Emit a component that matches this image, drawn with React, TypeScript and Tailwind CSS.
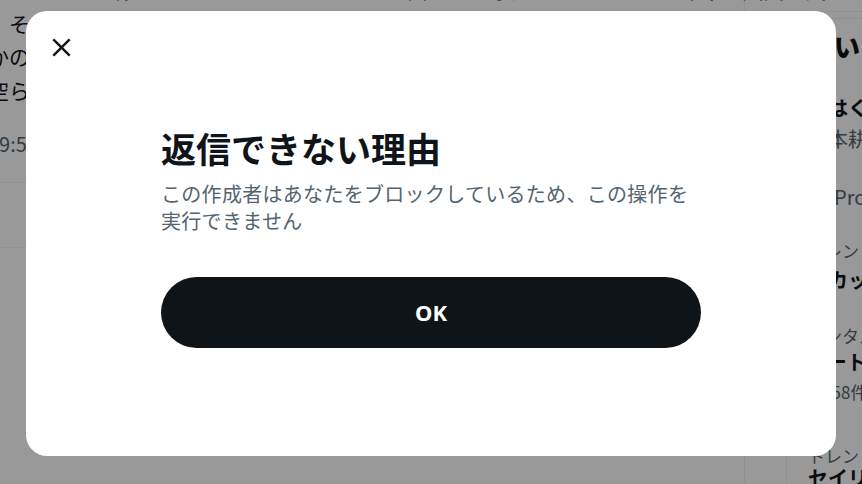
import React from 'react';

const jp = { fontFamily: '"Noto Sans CJK JP", "Noto Sans", sans-serif' };

// Tweet detail column, partly hidden behind the dialog
function MainColumn() {
  const lines = [
    '、もうすぐ連休ですね。みなさんはどこかへ出かける予定はありますか。今年は天気も良さそうです',
    '。その中でも一番楽しみにしているのは、久しぶりに会う友達との食事です。',
    'かの有名なお店にやっと予約が取れたので、当日までわくわくしています。',
    '空らしい青空の下で写真もたくさん撮りたいと思います。',
  ];
  return (
    <main className="ml-[-12px] mt-[-27px] w-[757px] shrink-0 border-r border-[#eff3f4]">
      <div className="pb-[24px] border-b border-[#eff3f4]">
        {lines.map((l) => (
          <div key={l} className="whitespace-nowrap text-[21px] leading-[33.5px] text-[#0f1419]">
            {l}
          </div>
        ))}
        <div className="mt-[24px] whitespace-nowrap text-[20px] leading-[26.7px] text-[#536471]">
          19:52 · 2024年5月1日 · 1.2万 件の表示
        </div>
      </div>
      <div className="h-[65px] border-b border-[#eff3f4]" />
    </main>
  );
}

function PromotedIcon() {
  return (
    <svg viewBox="0 0 24 24" className="h-[20px] w-[20px] fill-[#536471]">
      <path d="M19.498 3h-15c-1.381 0-2.5 1.12-2.5 2.5v13c0 1.38 1.119 2.5 2.5 2.5h15c1.381 0 2.5-1.12 2.5-2.5v-13c0-1.38-1.119-2.5-2.5-2.5zm-3.502 12h-2v-3.59l-5.293 5.3-1.414-1.420L12.581 10H8.996V8h7v7z" />
    </svg>
  );
}

// Right sidebar (trends)
function Sidebar() {
  return (
    <aside className="flex-1 min-w-0">
      <div className="h-[12px] border-b border-[#eff3f4]" />
      <div className="mt-[6px] ml-[41px] w-[380px] h-[600px] rounded-[21px] border border-[#eff3f4] pl-[21px] pt-[11px] whitespace-nowrap">
        <h2 className="text-[26px] leading-[32px] font-extrabold text-[#0f1419]">「いま」の話題</h2>
        <div className="mt-[31.5px] text-[20px] leading-[27px] font-bold text-[#0f1419]">おはくろ蜻蛉の季節</div>
        <div className="mt-[4px] text-[20px] leading-[27px] text-[#536471]">日本耕作の歴史について</div>
        <div className="mt-[31px] flex items-center gap-[6px] text-[20px] leading-[27px] text-[#536471]">
          <PromotedIcon />
          <span>Promoted by Sample</span>
        </div>
        <div className="mt-[30px] text-[17px] leading-[21px] text-[#536471]">トレンド</div>
        <div className="mt-[5px] text-[20px] leading-[27px] font-bold text-[#0f1419]">スカッとする話</div>
        <div className="mt-[32px] text-[17px] leading-[21px] text-[#536471]">エンタメ · トレンド</div>
        <div className="mt-[2px] text-[20px] leading-[27px] font-bold text-[#0f1419]">アート展</div>
        <div className="mt-[6px] text-[17px] leading-[21px] text-[#536471]">2,958件のポスト</div>
        <div className="mt-[43px] text-[17px] leading-[21px] text-[#536471]">トレンド</div>
        <div className="mt-[-2px] text-[20px] leading-[27px] font-bold text-[#0f1419]">セイリング</div>
      </div>
    </aside>
  );
}

function CloseIcon() {
  return (
    <svg viewBox="0 0 24 24" className="h-[29px] w-[29px] fill-[#0f1419]">
      <path d="M10.59 12L4.54 5.96l1.42-1.42L12 10.59l6.04-6.05 1.42 1.42L13.41 12l6.05 6.04-1.42 1.42L12 13.41l-6.04 6.05-1.42-1.42L10.59 12z" />
    </svg>
  );
}

export default function App() {
  return (
    <div className="relative w-[862px] h-[484px] overflow-hidden bg-white" style={jp}>
      <div className="flex h-full">
        <MainColumn />
        <Sidebar />
      </div>

      {/* Backdrop */}
      <div className="absolute inset-0 bg-black/40" />

      {/* Dialog */}
      <div className="absolute left-[26px] top-[11px] w-[810px] h-[445px] rounded-[21px] bg-white flex flex-col">
        <div className="px-[11px] pt-[12px]">
          <button className="h-[48px] w-[48px] rounded-full flex items-center justify-center">
            <CloseIcon />
          </button>
        </div>
        <div className="mx-auto w-[540px] mt-[56px]">
          <h1 className="text-[35px] leading-[42px] font-bold text-[#0f1419]">返信できない理由</h1>
          <p className="mt-[10.5px] text-[20px] leading-[27px] tracking-[0.3px] text-[#536471]">
            この作成者はあなたをブロックしているため、この操作を実行できません
          </p>
          <button className="mt-[43.5px] h-[71px] w-full rounded-full bg-[#0f1419] text-white text-[22px] font-bold" style={{ fontFamily: '"Noto Sans", sans-serif' }}>
            OK
          </button>
        </div>
      </div>
    </div>
  );
}
